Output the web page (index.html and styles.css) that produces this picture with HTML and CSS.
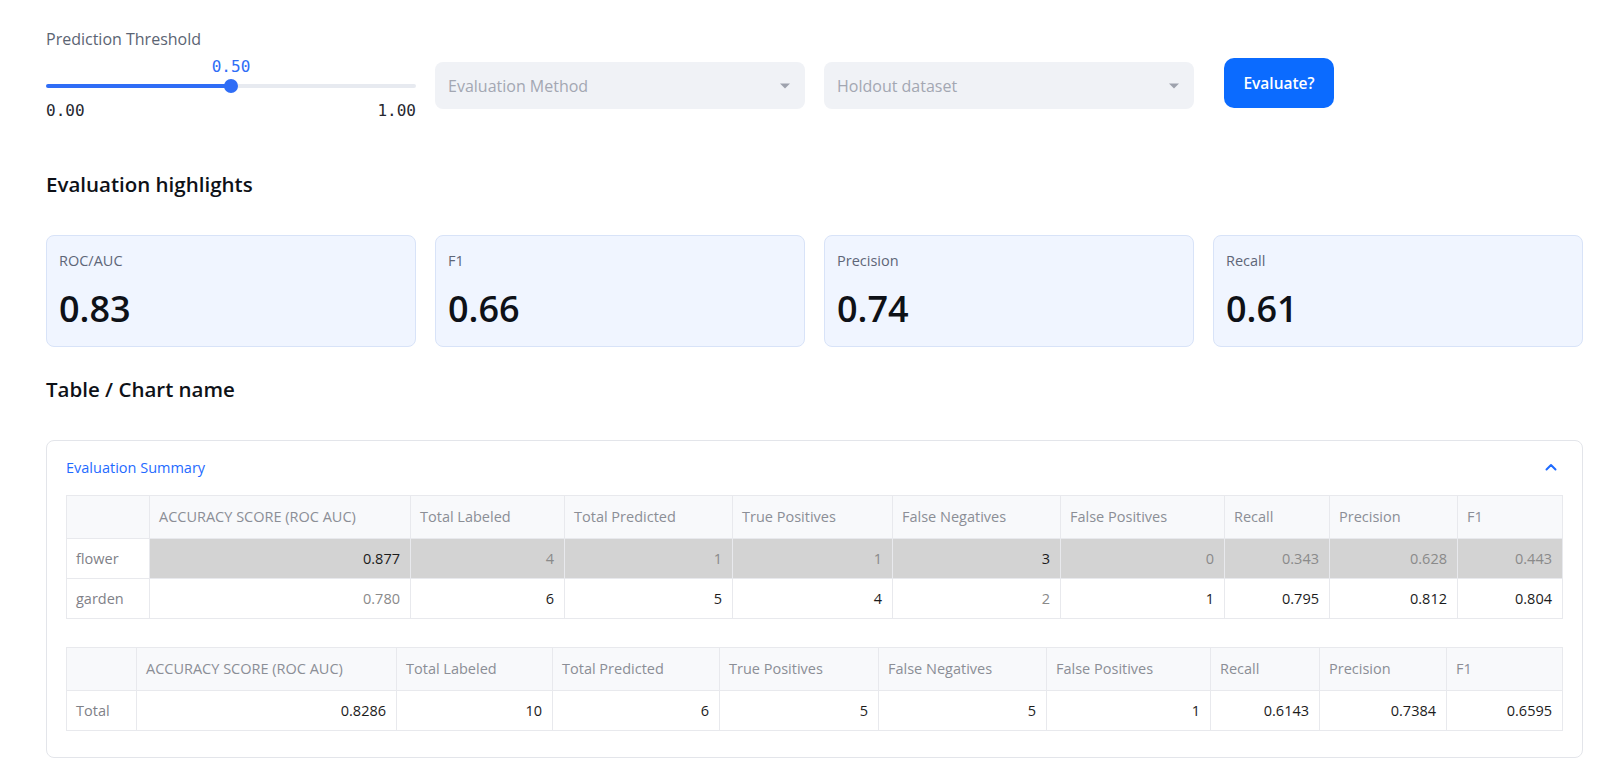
FILE: index.html
```html
<!DOCTYPE html>
<html lang="en">
<head>
<meta charset="utf-8">
<title>Evaluation</title>
<link rel="stylesheet" href="styles.css">
</head>
<body>
<main class="page">
  <section class="controls">
    <div class="slider-col">
      <div class="field-label">Prediction Threshold</div>
      <div class="slider-value-row"><span class="slider-value" style="left:50%">0.50</span></div>
      <div class="slider-track-row">
        <div class="slider-track" style="background:linear-gradient(to right,#2f6df6 50%,#e7eaf0 50%)"></div>
        <span class="slider-thumb" style="left:50%"></span>
      </div>
      <div class="slider-range"><span>0.00</span><span>1.00</span></div>
    </div>
    <div class="select">
      <span>Evaluation Method</span>
      <svg class="caret" width="10" height="6" viewBox="0 0 10 6"><path d="M0 0.5h10L5 5.5z" fill="#9ea2ad"/></svg>
    </div>
    <div class="select">
      <span>Holdout dataset</span>
      <svg class="caret" width="10" height="6" viewBox="0 0 10 6"><path d="M0 0.5h10L5 5.5z" fill="#9ea2ad"/></svg>
    </div>
    <div class="btn-cell"><button class="btn-primary">Evaluate?</button></div>
  </section>

  <h2 class="section-title highlights-title">Evaluation highlights</h2>
  <section class="metrics">
    <div class="metric"><div class="metric-label">ROC/AUC</div><div class="metric-value">0.83</div></div>
    <div class="metric"><div class="metric-label">F1</div><div class="metric-value">0.66</div></div>
    <div class="metric"><div class="metric-label">Precision</div><div class="metric-value">0.74</div></div>
    <div class="metric"><div class="metric-label">Recall</div><div class="metric-value">0.61</div></div>
  </section>

  <h2 class="section-title table-title">Table / Chart name</h2>
  <section class="expander">
    <div class="expander-head">
      <span>Evaluation Summary</span>
      <svg class="chevron" width="12" height="8" viewBox="0 0 12 8"><path d="M1.5 6.5L6 2l4.5 4.5" fill="none" stroke="#1f6bff" stroke-width="2" stroke-linecap="round" stroke-linejoin="round"/></svg>
    </div>
    <table class="grid grid-a">
      <colgroup><col><col><col><col><col><col><col><col><col><col></colgroup>
      <thead>
        <tr><th></th><th>ACCURACY SCORE (ROC AUC)</th><th>Total Labeled</th><th>Total Predicted</th><th>True Positives</th><th>False Negatives</th><th>False Positives</th><th>Recall</th><th>Precision</th><th>F1</th></tr>
      </thead>
      <tbody>
        <tr class="hl">
          <td class="row-label">flower</td><td class="dk">0.877</td><td class="lt">4</td><td class="lt">1</td><td class="lt">1</td><td class="dk">3</td><td class="lt">0</td><td class="lt">0.343</td><td class="lt">0.628</td><td class="lt">0.443</td>
        </tr>
        <tr>
          <td class="row-label">garden</td><td class="lt">0.780</td><td class="dk">6</td><td class="dk">5</td><td class="dk">4</td><td class="lt">2</td><td class="dk">1</td><td class="dk">0.795</td><td class="dk">0.812</td><td class="dk">0.804</td>
        </tr>
      </tbody>
    </table>
    <table class="grid grid-b">
      <colgroup><col><col><col><col><col><col><col><col><col><col></colgroup>
      <thead>
        <tr><th></th><th>ACCURACY SCORE (ROC AUC)</th><th>Total Labeled</th><th>Total Predicted</th><th>True Positives</th><th>False Negatives</th><th>False Positives</th><th>Recall</th><th>Precision</th><th>F1</th></tr>
      </thead>
      <tbody>
        <tr>
          <td class="row-label">Total</td><td class="dk">0.8286</td><td class="dk">10</td><td class="dk">6</td><td class="dk">5</td><td class="dk">5</td><td class="dk">1</td><td class="dk">0.6143</td><td class="dk">0.7384</td><td class="dk">0.6595</td>
        </tr>
      </tbody>
    </table>
  </section>
</main>
</body>
</html>
```

FILE: styles.css
```css
* { box-sizing: border-box; }

body {
  margin: 0;
  background: #ffffff;
  font-family: "Open Sans", "Noto Sans", sans-serif;
  color: #31333f;
}

.page {
  width: 1600px;
  padding: 28px 17px 0 46px;
}

/* ---------- controls row ---------- */
.controls {
  display: grid;
  grid-template-columns: repeat(4, 370px);
  column-gap: 19px;
  align-items: start;
}

.field-label {
  font-size: 16px;
  line-height: 22px;
  color: #5b6473;
}

.slider-value-row {
  position: relative;
  height: 22px;
  margin-top: 6px;
}

.slider-value {
  position: absolute;
  top: 0;
  transform: translateX(-50%);
  font-family: "DejaVu Sans Mono", monospace;
  font-size: 16px;
  line-height: 22px;
  color: #2f6df6;
}

.slider-track-row {
  position: relative;
  height: 14px;
  margin-top: 1px;
  display: flex;
  align-items: center;
}

.slider-track {
  width: 100%;
  height: 4px;
  border-radius: 2px;
}

.slider-thumb {
  position: absolute;
  top: 0;
  width: 14px;
  height: 14px;
  border-radius: 50%;
  background: #2f6df6;
  transform: translateX(-50%);
}

.slider-range {
  display: flex;
  justify-content: space-between;
  margin-top: 8px;
  font-family: "DejaVu Sans Mono", monospace;
  font-size: 16px;
  line-height: 20px;
  color: #262730;
}

.select {
  margin-top: 34px;
  height: 47px;
  border-radius: 8px;
  background: #f0f2f6;
  display: flex;
  align-items: center;
  justify-content: space-between;
  padding: 0 15px 0 13px;
  font-size: 16px;
  color: #a3a7b2;
}

.btn-cell {
  padding-left: 11px;
}

.btn-primary {
  margin-top: 30px;
  width: 110px;
  height: 50px;
  border: none;
  border-radius: 10px;
  background: #0b6bff;
  color: #ffffff;
  font-family: "Open Sans", "Noto Sans", sans-serif;
  font-size: 15.5px;
  font-weight: 600;
  padding: 0;
}

/* ---------- headings ---------- */
.section-title {
  margin: 0;
  font-size: 20.5px;
  font-weight: 600;
  line-height: 30px;
  color: #0e1117;
}

.highlights-title { margin-top: 48px; }
.table-title { margin-top: 27px; }

/* ---------- metrics ---------- */
.metrics {
  display: grid;
  grid-template-columns: repeat(4, 370px);
  column-gap: 19px;
  margin-top: 36px;
}

.metric {
  height: 112px;
  border: 1px solid #d8e3f8;
  border-radius: 8px;
  background: #f0f5ff;
  padding: 15px 13px 15px 12px;
}

.metric-label {
  font-size: 14.5px;
  line-height: 20px;
  color: #5e6678;
}

.metric-value {
  margin-top: 16px;
  font-size: 36px;
  font-weight: 600;
  line-height: 44px;
  color: #0e1117;
}

/* ---------- expander ---------- */
.expander {
  margin-top: 36px;
  border: 1px solid #e3e5ea;
  border-radius: 8px;
  padding: 15px 20px 26px 19px;
}

.expander-head {
  height: 22px;
  display: flex;
  align-items: center;
  justify-content: space-between;
  padding-right: 5px;
  font-size: 14.5px;
  color: #1f6bff;
}

.grid {
  width: 1496px;
  margin-top: 17px;
  border-collapse: collapse;
  table-layout: fixed;
  font-size: 14.5px;
}

.grid-b { margin-top: 28px; }

.grid th,
.grid td {
  border: 1px solid #e8e9ed;
  padding: 0 10px 0 9px;
  white-space: nowrap;
  overflow: hidden;
}

.grid th {
  background: #f8f9fb;
  font-weight: 400;
  text-align: left;
  line-height: 42px;
  color: #8b8e96;
}

.grid td {
  line-height: 39px;
  text-align: right;
}

.grid td.row-label {
  text-align: left;
  color: #7f8188;
  background: #ffffff;
}

.grid .hl td { background: #d3d3d3; }
.grid .hl td.row-label { background: #ffffff; }

.grid td.dk { color: #1c1c1c; }
.grid td.lt { color: #8a8a8a; }

.grid-a col:nth-child(1) { width: 83px; }
.grid-a col:nth-child(2) { width: 261px; }
.grid-a col:nth-child(3) { width: 154px; }
.grid-a col:nth-child(4) { width: 168px; }
.grid-a col:nth-child(5) { width: 160px; }
.grid-a col:nth-child(6) { width: 168px; }
.grid-a col:nth-child(7) { width: 164px; }
.grid-a col:nth-child(8) { width: 105px; }
.grid-a col:nth-child(9) { width: 128px; }
.grid-a col:nth-child(10) { width: 105px; }

.grid-b col:nth-child(1) { width: 70px; }
.grid-b col:nth-child(2) { width: 260px; }
.grid-b col:nth-child(3) { width: 156px; }
.grid-b col:nth-child(4) { width: 167px; }
.grid-b col:nth-child(5) { width: 159px; }
.grid-b col:nth-child(6) { width: 168px; }
.grid-b col:nth-child(7) { width: 164px; }
.grid-b col:nth-child(8) { width: 109px; }
.grid-b col:nth-child(9) { width: 127px; }
.grid-b col:nth-child(10) { width: 116px; }
```
